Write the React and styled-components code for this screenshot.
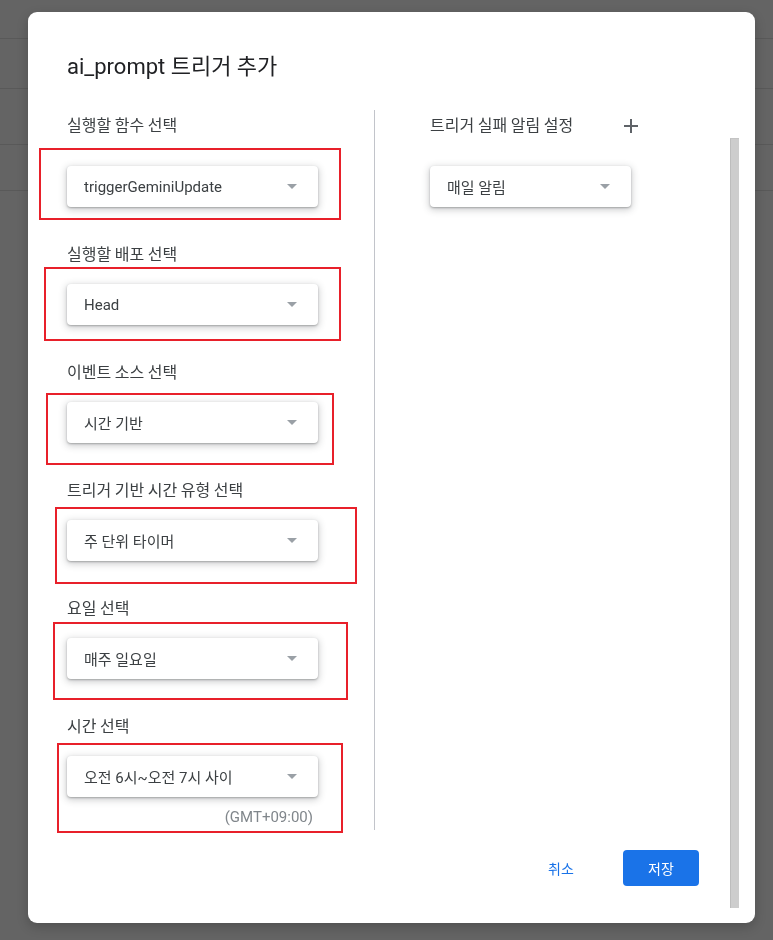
import React from 'react';
import styled, { createGlobalStyle } from 'styled-components';

const GlobalStyle = createGlobalStyle`
  html, body {
    margin: 0;
    padding: 0;
    background: #646464;
    font-family: Roboto, "Noto Sans CJK KR", sans-serif;
  }
`;

const Backdrop = styled.div`
  width: 773px;
  height: 940px;
  background: #646464;
  overflow: hidden;
`;

const BgRow = styled.div`
  height: ${props => props.$h}px;
  border-bottom: 1px solid #595959;
  box-sizing: border-box;
`;

const Dialog = styled.div`
  position: fixed;
  left: 28px;
  top: 12px;
  width: 727px;
  height: 911px;
  box-sizing: border-box;
  background: #fff;
  border-radius: 9px;
  padding: 41px 16px 0 39px;
  display: flex;
  flex-direction: column;
  box-shadow: 0 4px 12px rgba(0, 0, 0, 0.2);
`;

const Title = styled.h1`
  margin: 0 0 29px;
  font-size: 22px;
  line-height: 28px;
  font-weight: 400;
  color: #202124;
  font-family: Roboto, "Noto Sans CJK KR", sans-serif;
`;

const Body = styled.div`
  display: flex;
`;

const Main = styled.div`
  flex: 1;
  display: flex;
  flex-direction: column;
`;

const Columns = styled.div`
  display: flex;
`;

const LeftCol = styled.div`
  width: 307px;
  padding: 4px 0 3px;
  display: flex;
  flex-direction: column;
`;

const Divider = styled.div`
  width: 1px;
  background: #c2c4ca;
`;

const RightCol = styled.div`
  padding: 4px 0 0 55px;
  display: flex;
  flex-direction: column;
`;

const Section = styled.div`
  display: flex;
  flex-direction: column;
  margin-bottom: 36px;
  &:last-child {
    margin-bottom: 0;
  }
`;

const Label = styled.div`
  font-family: "Noto Sans CJK KR", Roboto, sans-serif;
  font-size: 16px;
  line-height: 20px;
  color: #3c4043;
  margin-bottom: ${props => (props.$first ? 32 : 21)}px;
`;

const LabelRow = styled.div`
  width: 213px;
  height: 20px;
  display: flex;
  align-items: center;
  justify-content: space-between;
  margin-bottom: 32px;
  ${Label} {
    margin-bottom: 0;
  }
`;

const PlusButton = styled.button`
  width: 24px;
  height: 24px;
  margin-top: 3px;
  border: none;
  background: none;
  padding: 0;
  display: flex;
  align-items: center;
  justify-content: center;
  cursor: pointer;
`;

const Field = styled.div`
  position: relative;
  width: ${props => props.$w}px;
  display: flex;
  flex-direction: column;
`;

const Select = styled.div`
  height: 41px;
  box-sizing: border-box;
  padding: 0 21px 0 17px;
  background: #fff;
  border-radius: 4px;
  display: flex;
  align-items: center;
  justify-content: space-between;
  box-shadow: 0 1px 2px rgba(60, 64, 67, 0.35), 0 2px 7px 1px rgba(60, 64, 67, 0.25);
  font-family: Roboto, "Noto Sans CJK KR", sans-serif;
  font-size: 15px;
  color: #3c4043;
`;

const Hint = styled.div`
  margin-top: 10px;
  padding-right: 5px;
  text-align: right;
  font-size: 15px;
  line-height: 20px;
  color: #80868b;
`;

const Highlight = styled.div`
  position: absolute;
  top: -${props => props.$box[0]}px;
  right: -${props => props.$box[1]}px;
  bottom: -${props => props.$box[2]}px;
  left: -${props => props.$box[3]}px;
  border: 2px solid #e8202a;
  pointer-events: none;
`;

const Footer = styled.div`
  display: flex;
  justify-content: flex-end;
  align-items: center;
  gap: 24px;
  margin-top: 20px;
  padding-right: 31px;
`;

const Button = styled.button`
  height: 36px;
  min-width: 76px;
  padding: 0 16px;
  border: none;
  border-radius: 4px;
  font-family: "Noto Sans CJK KR", Roboto, sans-serif;
  font-size: 14px;
  cursor: pointer;
  background: ${props => (props.$primary ? '#1a73e8' : 'transparent')};
  color: ${props => (props.$primary ? '#fff' : '#1a73e8')};
`;

const Scrollbar = styled.div`
  width: 9px;
  height: 770px;
  margin-top: 28px;
  box-sizing: border-box;
  background: #cdcdcd;
  border-left: 1px solid #bdbdbd;
  border-top: 1px solid #c4c4c4;
`;

const Arrow = () => (
  <svg width="10" height="5" viewBox="0 0 10 5">
    <polygon points="0,0 10,0 5,5" fill="#9aa0a6" />
  </svg>
);

const PlusIcon = () => (
  <svg width="14" height="14" viewBox="0 0 14 14">
    <path d="M7 0v14M0 7h14" stroke="#5f6368" strokeWidth="2" />
  </svg>
);

const fields = [
  { label: '실행할 함수 선택', value: 'triggerGeminiUpdate', box: [18, 23, 13, 28] },
  { label: '실행할 배포 선택', value: 'Head', box: [17, 23, 16, 23] },
  { label: '이벤트 소스 선택', value: '시간 기반', box: [9, 16, 22, 21] },
  { label: '트리거 기반 시간 유형 선택', value: '주 단위 타이머', box: [13, 39, 23, 12] },
  { label: '요일 선택', value: '매주 일요일', box: [16, 30, 21, 14] },
  { label: '시간 선택', value: '오전 6시~오전 7시 사이', box: [13, 25, 6, 10], hint: '(GMT+09:00)' },
];

const App = () => (
  <Backdrop>
    <GlobalStyle />
    <BgRow $h={39} />
    <BgRow $h={50} />
    <BgRow $h={56} />
    <BgRow $h={46} />
    <Dialog>
      <Title>ai_prompt 트리거 추가</Title>
      <Body>
        <Main>
          <Columns>
            <LeftCol>
              {fields.map((f, i) => (
                <Section key={f.label}>
                  <Label $first={i === 0}>{f.label}</Label>
                  <Field $w={251}>
                    <Select>
                      <span>{f.value}</span>
                      <Arrow />
                    </Select>
                    {f.hint && <Hint>{f.hint}</Hint>}
                    <Highlight $box={f.box} />
                  </Field>
                </Section>
              ))}
            </LeftCol>
            <Divider />
            <RightCol>
              <LabelRow>
                <Label>트리거 실패 알림 설정</Label>
                <PlusButton aria-label="추가">
                  <PlusIcon />
                </PlusButton>
              </LabelRow>
              <Field $w={201}>
                <Select>
                  <span>매일 알림</span>
                  <Arrow />
                </Select>
              </Field>
            </RightCol>
          </Columns>
          <Footer>
            <Button>취소</Button>
            <Button $primary>저장</Button>
          </Footer>
        </Main>
        <Scrollbar />
      </Body>
    </Dialog>
  </Backdrop>
);

export default App;
